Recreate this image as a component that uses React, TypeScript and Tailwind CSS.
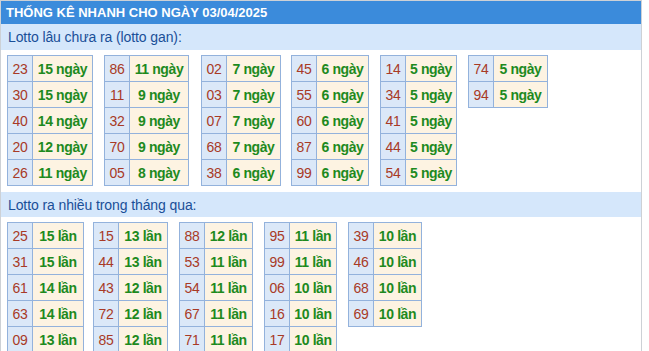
import React from "react";

type Row = [string, string];
type Tbl = { rows: Row[]; w: string; ml: string };

const unit1 = "ngày";
const unit2 = "lần";

const sec1: Tbl[] = [
  { rows: [["23", "15"], ["30", "15"], ["40", "14"], ["20", "12"], ["26", "11"]], w: "w-[60px]", ml: "ml-0" },
  { rows: [["86", "11"], ["11", "9"], ["32", "9"], ["70", "9"], ["05", "8"]], w: "w-[59px]", ml: "ml-[11px]" },
  { rows: [["02", "7"], ["03", "7"], ["07", "7"], ["68", "7"], ["38", "6"]], w: "w-[54px]", ml: "ml-[12px]" },
  { rows: [["45", "6"], ["55", "6"], ["60", "6"], ["87", "6"], ["99", "6"]], w: "w-[52px]", ml: "ml-[10px]" },
  { rows: [["14", "5"], ["34", "5"], ["41", "5"], ["44", "5"], ["54", "5"]], w: "w-[51px]", ml: "ml-[11px]" },
  { rows: [["74", "5"], ["94", "5"]], w: "w-[54px]", ml: "ml-[11px]" },
];

const sec2: Tbl[] = [
  { rows: [["25", "15"], ["31", "15"], ["61", "14"], ["63", "14"], ["09", "13"]], w: "w-[51px]", ml: "ml-0" },
  { rows: [["15", "13"], ["44", "13"], ["43", "12"], ["72", "12"], ["85", "12"]], w: "w-[49px]", ml: "ml-[9px]" },
  { rows: [["88", "12"], ["53", "11"], ["54", "11"], ["67", "11"], ["71", "11"]], w: "w-[48px]", ml: "ml-[11px]" },
  { rows: [["95", "11"], ["99", "11"], ["06", "10"], ["16", "10"], ["17", "10"]], w: "w-[47px]", ml: "ml-[11px]" },
  { rows: [["39", "10"], ["46", "10"], ["68", "10"], ["69", "10"]], w: "w-[48px]", ml: "ml-[11px]" },
];

function Table({ t, unit }: { t: Tbl; unit: string }) {
  return (
    <div className={`${t.ml} flex flex-col border-l border-t border-[#93b2dc]`}>
      {t.rows.map(([n, v], i) => (
        <div key={i} className="flex h-[26px]">
          <div className="w-[25px] flex items-center justify-center bg-[#dbe8f8] border-r border-b border-[#93b2dc] text-[#a83a26] text-[14px] tracking-[-0.3px] leading-none">
            {n}
          </div>
          <div className={`${t.w} flex items-center justify-center bg-[#fdf3e2] border-r border-b border-[#93b2dc] text-[#1e8a1e] text-[14px] tracking-[-0.4px] font-bold leading-none`}>
            {v} {unit}
          </div>
        </div>
      ))}
    </div>
  );
}

export default function App() {
  return (
    <div className="w-[649px] h-[351px] overflow-hidden bg-white" style={{ fontFamily: '"Liberation Sans", Arial, sans-serif' }}>
      <div className="w-[642px] border border-[#cdd1d6] border-b-0">
        <div className="h-[23px] bg-[#3b8bdb] flex items-center pl-[5px] text-white text-[13px] font-bold leading-none">
          THỐNG KÊ NHANH CHO NGÀY 03/04/2025
        </div>
        <div className="h-[26px] bg-[#d5e7fb] flex items-center pl-[7px] text-[#1a4f98] text-[14px] tracking-[-0.1px] leading-none">
          Lotto lâu chưa ra (lotto gan):
        </div>
        <div className="flex items-start pl-[6px] pt-[5px] pb-[6px]">
          {sec1.map((t, i) => (
            <Table key={i} t={t} unit={unit1} />
          ))}
        </div>
        <div className="h-[25px] bg-[#d5e7fb] flex items-center pl-[7px] text-[#1a4f98] text-[14px] tracking-[-0.1px] leading-none">
          Lotto ra nhiều trong tháng qua:
        </div>
        <div className="flex items-start pl-[6px] pt-[5px] pb-[6px]">
          {sec2.map((t, i) => (
            <Table key={i} t={t} unit={unit2} />
          ))}
        </div>
      </div>
    </div>
  );
}
